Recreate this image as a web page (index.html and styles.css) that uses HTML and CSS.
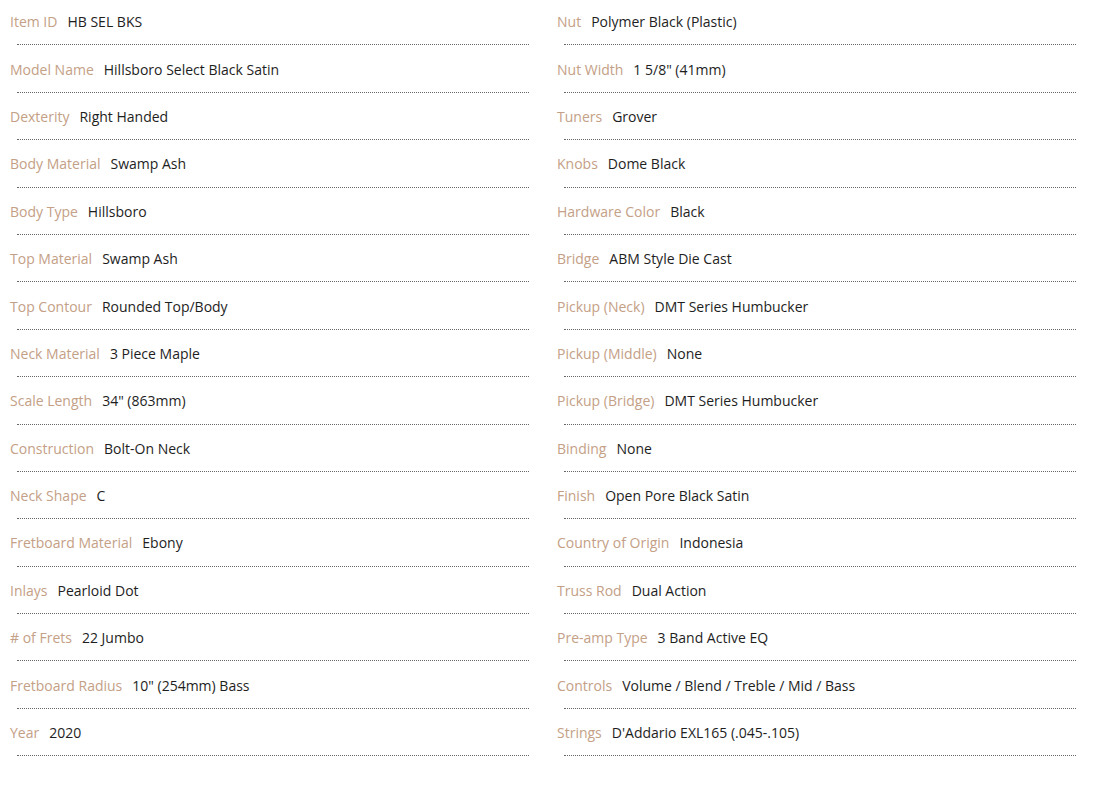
FILE: index.html
```html
<!DOCTYPE html>
<html lang="en">
<head>
<meta charset="utf-8">
<title>Specifications</title>
<link rel="stylesheet" href="styles.css">
</head>
<body>
<div class="specs">
  <ul class="spec-col">
    <li class="spec"><div class="spec-text"><span class="label">Item ID</span><span class="value">HB SEL BKS</span></div><div class="rule"></div></li>
    <li class="spec"><div class="spec-text"><span class="label">Model Name</span><span class="value">Hillsboro Select Black Satin</span></div><div class="rule"></div></li>
    <li class="spec"><div class="spec-text"><span class="label">Dexterity</span><span class="value">Right Handed</span></div><div class="rule"></div></li>
    <li class="spec"><div class="spec-text"><span class="label">Body Material</span><span class="value">Swamp Ash</span></div><div class="rule"></div></li>
    <li class="spec"><div class="spec-text"><span class="label">Body Type</span><span class="value">Hillsboro</span></div><div class="rule"></div></li>
    <li class="spec"><div class="spec-text"><span class="label">Top Material</span><span class="value">Swamp Ash</span></div><div class="rule"></div></li>
    <li class="spec"><div class="spec-text"><span class="label">Top Contour</span><span class="value">Rounded Top/Body</span></div><div class="rule"></div></li>
    <li class="spec"><div class="spec-text"><span class="label">Neck Material</span><span class="value">3 Piece Maple</span></div><div class="rule"></div></li>
    <li class="spec"><div class="spec-text"><span class="label">Scale Length</span><span class="value">34" (863mm)</span></div><div class="rule"></div></li>
    <li class="spec"><div class="spec-text"><span class="label">Construction</span><span class="value">Bolt-On Neck</span></div><div class="rule"></div></li>
    <li class="spec"><div class="spec-text"><span class="label">Neck Shape</span><span class="value">C</span></div><div class="rule"></div></li>
    <li class="spec"><div class="spec-text"><span class="label">Fretboard Material</span><span class="value">Ebony</span></div><div class="rule"></div></li>
    <li class="spec"><div class="spec-text"><span class="label">Inlays</span><span class="value">Pearloid Dot</span></div><div class="rule"></div></li>
    <li class="spec"><div class="spec-text"><span class="label"># of Frets</span><span class="value">22 Jumbo</span></div><div class="rule"></div></li>
    <li class="spec"><div class="spec-text"><span class="label">Fretboard Radius</span><span class="value">10" (254mm) Bass</span></div><div class="rule"></div></li>
    <li class="spec"><div class="spec-text"><span class="label">Year</span><span class="value">2020</span></div><div class="rule"></div></li>
  </ul>
  <ul class="spec-col">
    <li class="spec"><div class="spec-text"><span class="label">Nut</span><span class="value">Polymer Black (Plastic)</span></div><div class="rule"></div></li>
    <li class="spec"><div class="spec-text"><span class="label">Nut Width</span><span class="value">1 5/8" (41mm)</span></div><div class="rule"></div></li>
    <li class="spec"><div class="spec-text"><span class="label">Tuners</span><span class="value">Grover</span></div><div class="rule"></div></li>
    <li class="spec"><div class="spec-text"><span class="label">Knobs</span><span class="value">Dome Black</span></div><div class="rule"></div></li>
    <li class="spec"><div class="spec-text"><span class="label">Hardware Color</span><span class="value">Black</span></div><div class="rule"></div></li>
    <li class="spec"><div class="spec-text"><span class="label">Bridge</span><span class="value">ABM Style Die Cast</span></div><div class="rule"></div></li>
    <li class="spec"><div class="spec-text"><span class="label">Pickup (Neck)</span><span class="value">DMT Series Humbucker</span></div><div class="rule"></div></li>
    <li class="spec"><div class="spec-text"><span class="label">Pickup (Middle)</span><span class="value">None</span></div><div class="rule"></div></li>
    <li class="spec"><div class="spec-text"><span class="label">Pickup (Bridge)</span><span class="value">DMT Series Humbucker</span></div><div class="rule"></div></li>
    <li class="spec"><div class="spec-text"><span class="label">Binding</span><span class="value">None</span></div><div class="rule"></div></li>
    <li class="spec"><div class="spec-text"><span class="label">Finish</span><span class="value">Open Pore Black Satin</span></div><div class="rule"></div></li>
    <li class="spec"><div class="spec-text"><span class="label">Country of Origin</span><span class="value">Indonesia</span></div><div class="rule"></div></li>
    <li class="spec"><div class="spec-text"><span class="label">Truss Rod</span><span class="value">Dual Action</span></div><div class="rule"></div></li>
    <li class="spec"><div class="spec-text"><span class="label">Pre-amp Type</span><span class="value">3 Band Active EQ</span></div><div class="rule"></div></li>
    <li class="spec"><div class="spec-text"><span class="label">Controls</span><span class="value">Volume / Blend / Treble / Mid / Bass</span></div><div class="rule"></div></li>
    <li class="spec"><div class="spec-text"><span class="label">Strings</span><span class="value">D'Addario EXL165 (.045-.105)</span></div><div class="rule"></div></li>
  </ul>
</div>
</body>
</html>
```
FILE: styles.css
```css
html, body {
  margin: 0;
  padding: 0;
  background: #ffffff;
}
body {
  font-family: "Open Sans", "Noto Sans", "Liberation Sans", sans-serif;
  font-size: 14px;
  color: #222222;
}
.specs {
  display: grid;
  grid-template-columns: 547px 547px;
  margin-top: -2px;
}
.spec-col {
  list-style: none;
  margin: 0;
  padding: 0;
}
.spec {
  height: 47.4px;
  display: flex;
  flex-direction: column;
}
.spec-text {
  flex: 1;
  display: flex;
  align-items: center;
  padding: 2px 0 0 10px;
  line-height: 20px;
  white-space: nowrap;
}
.label {
  color: #c4a086;
  margin-right: 10px;
}
.value {
  color: #1e1e1e;
}
.rule {
  margin: 0 18px 0 17px;
  border-top: 1px dotted #666666;
}
```
